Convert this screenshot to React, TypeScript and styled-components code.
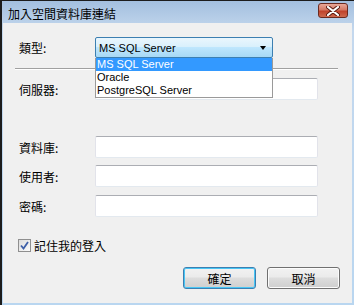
import React from 'react';
import styled, { createGlobalStyle } from 'styled-components';

const GlobalStyle = createGlobalStyle`
  html, body {
    margin: 0;
    padding: 0;
    background: #e8e8e8;
  }
  body {
    font-family: "Noto Sans CJK TC", "Liberation Sans", sans-serif;
    font-size: 12px;
    color: #000;
  }
`;

const options = ['MS SQL Server', 'Oracle', 'PostgreSQL Server'];

export default function App() {
  const [selected] = React.useState(0);
  return (
    <>
      <GlobalStyle />
      <Window>
        <TitleBar>
          <Title>加入空間資料庫連結</Title>
          <CloseButton>
            <svg width="14" height="10" viewBox="0 0 14 10">
              <path d="M2 1 L12 9 M12 1 L2 9" stroke="#5a1a10" strokeWidth="4" strokeLinecap="round" />
              <path d="M2 1 L12 9 M12 1 L2 9" stroke="#fff" strokeWidth="2.2" strokeLinecap="round" />
            </svg>
          </CloseButton>
        </TitleBar>
        <Body>
          <Row>
            <Label>類型:</Label>
            <ComboWrap>
              <Combo>
                <ComboText>{options[selected]}</ComboText>
                <Arrow />
              </Combo>
              <DropList>
                {options.map((o, i) => (
                  <DropItem key={o} active={i === selected}>{o}</DropItem>
                ))}
              </DropList>
            </ComboWrap>
          </Row>
          <Separator />
          <Row $top={8}>
            <Label>伺服器:</Label>
            <TextBox />
          </Row>
          <Row $top={36}>
            <Label>資料庫:</Label>
            <TextBox />
          </Row>
          <Row $top={7}>
            <Label>使用者:</Label>
            <TextBox />
          </Row>
          <Row $top={8}>
            <Label>密碼:</Label>
            <TextBox />
          </Row>
          <CheckRow>
            <CheckBox>
              <svg width="9" height="9" viewBox="0 0 9 9">
                <path d="M1 4.5 L3.5 7.5 L8 1" stroke="#3d5fa8" strokeWidth="1.8" fill="none" />
              </svg>
            </CheckBox>
            <span>記住我的登入</span>
          </CheckRow>
          <ButtonRow>
            <Button focused>確定</Button>
            <Button>取消</Button>
          </ButtonRow>
        </Body>
      </Window>
    </>
  );
}

const Window = styled.div`
  width: 349px;
  height: 302px;
  border: 1px solid #1c1c1c;
  border-left-width: 2px;
  border-bottom-width: 3px;
  padding: 0 2px 2px 1px;
  background: linear-gradient(#a3bfdf, #c4d8ee 30px, #b9d6f0);
  display: flex;
  flex-direction: column;
`;

const TitleBar = styled.div`
  height: 22px;
  display: flex;
  align-items: center;
  justify-content: space-between;
  padding: 0 4px 0 5px;
`;

const Title = styled.div`
  font-size: 12px;
  margin-top: 2px;
`;

const CloseButton = styled.div`
  width: 28px;
  height: 13px;
  margin-top: -3px;
  border: 1px solid #6b2a20;
  border-radius: 3px;
  background: linear-gradient(#e9a899, #d47965 45%, #c0422b 55%, #cd6a4f);
  display: flex;
  align-items: center;
  justify-content: center;
`;

const Body = styled.div`
  flex: 1;
  background: #f0f0f0;
  display: flex;
  flex-direction: column;
  padding: 14px 12px 0 16px;
`;

const Row = styled.div<{ $top?: number }>`
  display: flex;
  align-items: center;
  margin-top: ${p => p.$top || 0}px;
`;

const Label = styled.div`
  width: 76px;
  font-size: 12px;
`;

const ComboWrap = styled.div`
  position: relative;
`;

const Combo = styled.div`
  height: 19px;
  border: 1px solid #3c7fb1;
  border-radius: 2px;
  background: linear-gradient(#eaf6fd, #d9f0fc 45%, #bee6fd 50%, #a7d9f5);
  display: flex;
  align-items: center;
  justify-content: space-between;
  padding: 0 6px 0 3px;
  box-sizing: content-box;
  width: 167px;
`;

const ComboText = styled.span`
  font-family: "Liberation Sans", sans-serif;
  font-size: 11px;
`;

const Arrow = styled.div`
  width: 0;
  height: 0;
  border-left: 3.5px solid transparent;
  border-right: 3.5px solid transparent;
  border-top: 4px solid #000;
`;

const DropList = styled.div`
  position: absolute;
  top: 21px;
  left: 0;
  width: 176px;
  background: #fff;
  border: 1px solid #9a9a9a;
  border-top: none;
  z-index: 5;
`;

const DropItem = styled.div<{ active?: boolean }>`
  height: 13px;
  line-height: 13px;
  padding-left: 1px;
  font-family: "Liberation Sans", sans-serif;
  font-size: 11px;
  background: ${p => (p.active ? '#3399ff' : '#fff')};
  color: ${p => (p.active ? '#fff' : '#000')};
`;

const Separator = styled.div`
  margin: 10px 0 0 -4px;
  width: 323px;
  height: 1px;
  background: #a0a0a0;
  border-bottom: 1px solid #fff;
`;

const TextBox = styled.div`
  width: 221px;
  height: 20px;
  background: #fff;
  border: 1px solid #e2e3ea;
  border-top-color: #abadb3;
  border-bottom-color: #e3e9ef;
  border-radius: 2px;
`;

const CheckRow = styled.div`
  display: flex;
  align-items: center;
  gap: 3px;
  height: 14px;
  margin: 21px 0 0 -1px;
  font-size: 12px;
`;

const CheckBox = styled.div`
  width: 11px;
  height: 11px;
  border: 1px solid #8f8f8f;
  background: linear-gradient(135deg, #dcdcdc, #fbfbfb);
  display: flex;
  align-items: center;
  justify-content: center;
`;

const ButtonRow = styled.div`
  display: flex;
  justify-content: flex-end;
  gap: 11px;
  margin-top: 15px;
`;

const Button = styled.div<{ focused?: boolean }>`
  width: 71px;
  height: 20px;
  border: 1px solid ${p => (p.focused ? '#3c7fb1' : '#707070')};
  box-shadow: ${p => (p.focused ? 'inset 0 0 0 1px #48c6f5' : 'inset 0 0 0 1px #fcfcfc')};
  border-radius: 3px;
  background: linear-gradient(#f2f2f2, #ebebeb 45%, #dddddd 50%, #cfcfcf);
  display: flex;
  align-items: center;
  justify-content: center;
  font-size: 12px;
`;
